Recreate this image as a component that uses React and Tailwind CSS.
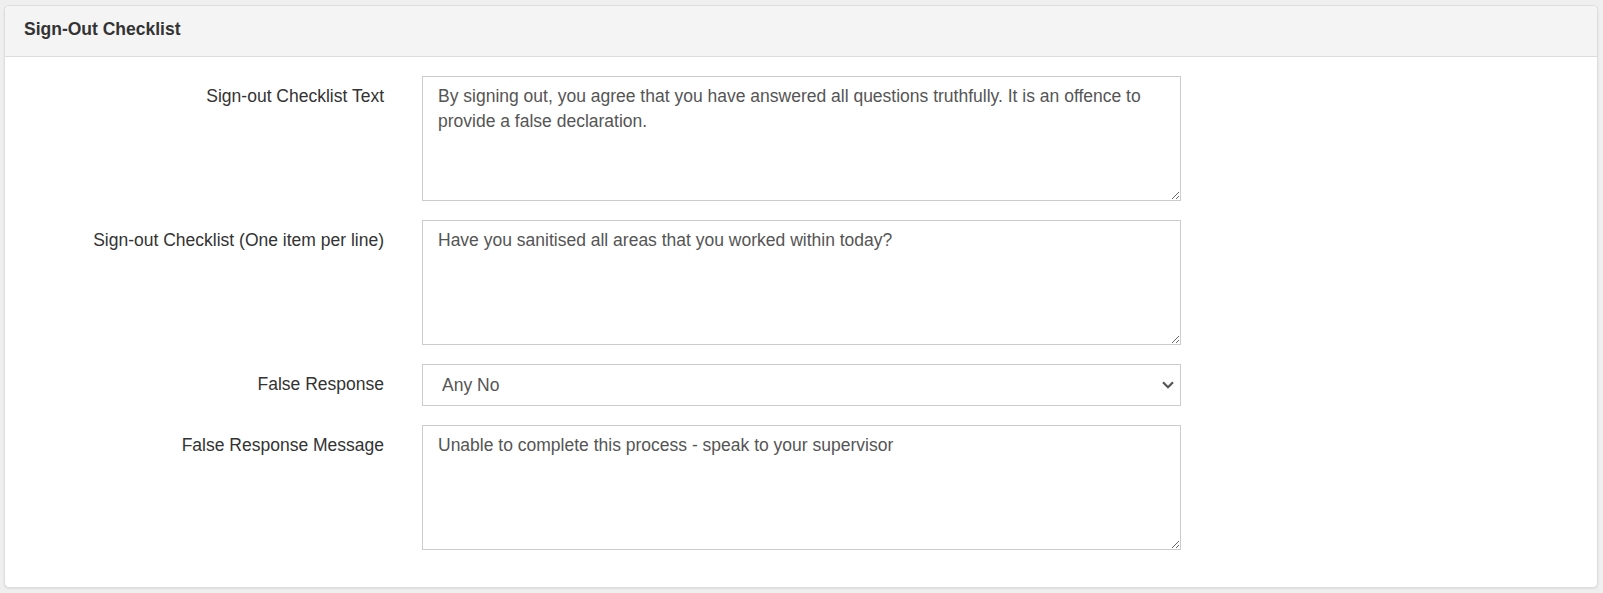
import { useState } from "react";

// Label + control row, bootstrap-ish horizontal form
const Row = ({ label, children }) => (
  <div className="flex items-start mb-[19px] last:mb-0">
    <label className="w-[379px] shrink-0 text-right pt-[8px] text-[17.5px] leading-[25px] text-[#333]">
      {label}
    </label>
    <div className="ml-[38px] w-[759px]">{children}</div>
  </div>
);

const App = () => {
  const [text, setText] = useState(
    "By signing out, you agree that you have answered all questions truthfully. It is an offence to provide a false declaration."
  );
  const [items, setItems] = useState(
    "Have you sanitised all areas that you worked within today?"
  );
  const [response, setResponse] = useState("any-no");
  const [message, setMessage] = useState(
    "Unable to complete this process - speak to your supervisor"
  );

  const fieldClass =
    "block w-full h-[125px] border border-[#cccccc] bg-white px-[15px] py-[7px] text-[17.5px] leading-[25px] text-[#555] outline-none";

  return (
    <div
      className="min-h-[593px] bg-[#efefef] pt-[5px] pl-[4px] pr-[5px] pb-[6px]"
      style={{ fontFamily: '"Liberation Sans", Arial, sans-serif' }}
    >
      <div className="bg-white border border-[#dddddd] rounded-[5px] shadow-[0_1px_2px_rgba(0,0,0,0.08)]">
        {/* Panel heading */}
        <div className="h-[51px] bg-[#f4f4f4] border-b border-[#dddddd] rounded-t-[5px] px-[19px] pt-[11px]">
          <h3 className="text-[17.5px] leading-[25px] font-bold text-[#333]">
            Sign-Out Checklist
          </h3>
        </div>

        {/* Panel body */}
        <div className="pt-[19px] pb-[37px]">
          <Row label="Sign-out Checklist Text">
            <textarea
              className={fieldClass}
              value={text}
              onChange={(e) => setText(e.target.value)}
            />
          </Row>
          <Row label="Sign-out Checklist (One item per line)">
            <textarea
              className={fieldClass}
              value={items}
              onChange={(e) => setItems(e.target.value)}
            />
          </Row>
          <Row label="False Response">
            <div className="relative">
              <select
                className="block w-full h-[42px] appearance-none border border-[#cccccc] bg-white pl-[19px] pr-[40px] text-[17.5px] text-[#555] outline-none"
                value={response}
                onChange={(e) => setResponse(e.target.value)}
              >
                <option value="any-no">Any No</option>
                <option value="any-yes">Any Yes</option>
              </select>
              <svg
                className="pointer-events-none absolute right-[7px] top-[17px] w-[12px] h-[8px] text-[#555]"
                viewBox="0 0 12 8"
                fill="none"
                stroke="currentColor"
                strokeWidth={2.2}
              >
                <path d="M1 1.2l5 5 5-5" />
              </svg>
            </div>
          </Row>
          <Row label="False Response Message">
            <textarea
              className={fieldClass}
              value={message}
              onChange={(e) => setMessage(e.target.value)}
            />
          </Row>
        </div>
      </div>
    </div>
  );
};

export default App;
